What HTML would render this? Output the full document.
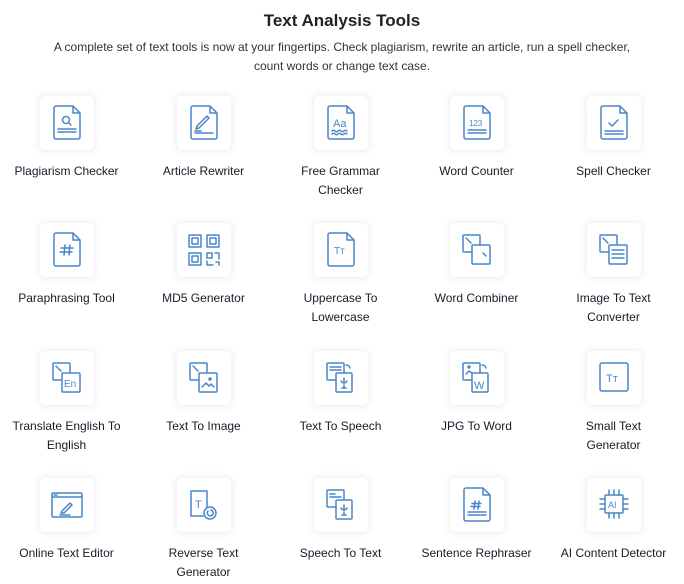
<!DOCTYPE html>
<html><head><meta charset="utf-8"><style>
body{margin:0;width:684px;height:584px;background:#fff;font-family:"Liberation Sans",sans-serif;color:#1c1c2b;position:relative;overflow:hidden}
h1{position:absolute;top:10px;left:0;width:684px;margin:0;text-align:center;font-size:17px;font-weight:bold;line-height:22px;color:#222}
p.s{position:absolute;top:38px;left:44px;width:596px;margin:0;text-align:center;font-size:12px;line-height:19px;color:#333}
.c{position:absolute;width:137px;text-align:center}
.b{width:54px;height:54px;margin:0 auto;border-radius:5px;background:#fff;box-shadow:0 0 6px 2px rgba(120,140,170,.13)}
.b svg{width:54px;height:54px;fill:none;stroke:#4a86c8;stroke-width:1.5;stroke-linecap:round;stroke-linejoin:round}
.b svg .f{fill:#fff}
.b svg text{fill:#4a86c8;stroke:none;font-family:"Liberation Sans",sans-serif}
.l{margin-top:12px;font-size:12px;line-height:19px;color:#1a1a2a}
</style></head><body>
<svg width="0" height="0" style="position:absolute"><defs>
<path id="d" d="M16 10H33L40 17V41A2 2 0 0 1 38 43H16A2 2 0 0 1 14 41V12A2 2 0 0 1 16 10ZM33 10V17H40"/>
<rect id="bk" x="13" y="12" width="17" height="17" rx="1"/>
</defs></svg>
<h1>Text Analysis Tools</h1>
<p class="s">A complete set of text tools is now at your fingertips. Check plagiarism, rewrite an article, run a spell checker, count words or change text case.</p>

<div class="c" style="left:-2px;top:96px"><div class="b"><svg><use href="#d"/><circle cx="26" cy="24" r="3.5"/><path d="M28.5 26.5L31 29M18 33H36M18 36H36"/></svg></div><div class="l">Plagiarism Checker</div></div>
<div class="c" style="left:135px;top:96px"><div class="b"><svg><use href="#d"/><path d="M20 30L30 20L32 22L22 32L19 33Z M18 35H24M18 37H36"/></svg></div><div class="l">Article Rewriter</div></div>
<div class="c" style="left:272px;top:96px"><div class="b"><svg><use href="#d"/><text x="19" y="31" font-size="11">Aa</text><path d="M18 35q1.5-1.5 3 0t3 0 3 0 3 0 3 0M18 38q1.5-1.5 3 0t3 0 3 0 3 0 3 0"/></svg></div><div class="l">Free Grammar<br>Checker</div></div>
<div class="c" style="left:408px;top:96px"><div class="b"><svg><use href="#d"/><text x="19" y="30" font-size="8">123</text><path d="M18 34H36M18 37H36"/></svg></div><div class="l">Word Counter</div></div>
<div class="c" style="left:545px;top:96px"><div class="b"><svg><use href="#d"/><path d="M22 27L25 30L31 24M18 35H36M18 38H36"/></svg></div><div class="l">Spell Checker</div></div>

<div class="c" style="left:-2px;top:223px"><div class="b"><svg><use href="#d"/><path d="M25 22L24 32M30 22L29 32M21 25H33M20 29H32"/></svg></div><div class="l">Paraphrasing Tool</div></div>
<div class="c" style="left:135px;top:223px"><div class="b"><svg><rect x="12" y="12" width="12" height="12"/><rect x="15" y="15" width="6" height="6"/><rect x="30" y="12" width="12" height="12"/><rect x="33" y="15" width="6" height="6"/><rect x="12" y="30" width="12" height="12"/><rect x="15" y="33" width="6" height="6"/><path d="M30 30H35V35H30ZM38 30H42V36M30 38V42H36M39 39H42V42"/></svg></div><div class="l">MD5 Generator</div></div>
<div class="c" style="left:272px;top:223px"><div class="b"><svg><use href="#d"/><text x="20" y="31" font-size="10">Tт</text></svg></div><div class="l">Uppercase To<br>Lowercase</div></div>
<div class="c" style="left:408px;top:223px"><div class="b"><svg><use href="#bk"/><path d="M16 15L21 20"/><rect class="f" x="22" y="22" width="18" height="19" rx="1"/><path d="M33 30L36 33"/></svg></div><div class="l">Word Combiner</div></div>
<div class="c" style="left:545px;top:223px"><div class="b"><svg><use href="#bk"/><path d="M16 15L21 20"/><rect class="f" x="22" y="22" width="18" height="19" rx="1"/><path d="M25 27H37M25 31H37M25 35H37"/></svg></div><div class="l">Image To Text<br>Converter</div></div>

<div class="c" style="left:-2px;top:351px"><div class="b"><svg><use href="#bk"/><path d="M16 15L21 20"/><rect class="f" x="22" y="22" width="18" height="19" rx="1"/><text x="24" y="36" font-size="10">En</text></svg></div><div class="l">Translate English To<br>English</div></div>
<div class="c" style="left:135px;top:351px"><div class="b"><svg><use href="#bk"/><path d="M16 15L21 20"/><rect class="f" x="22" y="22" width="18" height="19" rx="1"/><path d="M25 36L29 32L32 35L34 33L37 36"/><circle cx="33" cy="28" r="1"/></svg></div><div class="l">Text To Image</div></div>
<div class="c" style="left:272px;top:351px"><div class="b"><svg><use href="#bk"/><path d="M16 16H27M16 19H27M32 14q3 0 4 3"/><rect class="f" x="22" y="22" width="16" height="19" rx="1"/><path d="M30 27V32M27 30q3 4 6 0M30 34V37M28 37H32"/></svg></div><div class="l">Text To Speech</div></div>
<div class="c" style="left:408px;top:351px"><div class="b"><svg><use href="#bk"/><path d="M16 23L19 20L22 22M32 14q3 0 4 3"/><circle cx="19" cy="16" r="1"/><rect class="f" x="22" y="22" width="16" height="19" rx="1"/><text x="24" y="38" font-size="11">W</text></svg></div><div class="l">JPG To Word</div></div>
<div class="c" style="left:545px;top:351px"><div class="b"><svg><rect x="13" y="12" width="28" height="28" rx="2"/><text x="19" y="31" font-size="11">Tт</text></svg></div><div class="l">Small Text<br>Generator</div></div>

<div class="c" style="left:-2px;top:478px"><div class="b"><svg><rect x="12" y="15" width="30" height="24" rx="1"/><path d="M12 19H42M14 17H17M22 33L30 25L32 27L24 35L21 35ZM20 37H30"/></svg></div><div class="l">Online Text Editor</div></div>
<div class="c" style="left:135px;top:478px"><div class="b"><svg><path d="M30 29V13H14V38H26"/><text x="18" y="30" font-size="11">T</text><circle class="f" cx="33" cy="35" r="6"/><path d="M31 33a3 3 0 1 0 3 -1"/></svg></div><div class="l">Reverse Text<br>Generator</div></div>
<div class="c" style="left:272px;top:478px"><div class="b"><svg><use href="#bk"/><path d="M16 16H21M16 19H27"/><rect class="f" x="22" y="22" width="16" height="19" rx="1"/><path d="M30 27V32M27 30q3 4 6 0M30 34V37M28 37H32"/></svg></div><div class="l">Speech To Text</div></div>
<div class="c" style="left:408px;top:478px"><div class="b"><svg><use href="#d"/><path d="M25 23L24 31M29 23L28 31M22 25.5H31M21 28.5H30M18 34H36M18 37H36"/></svg></div><div class="l">Sentence Rephraser</div></div>
<div class="c" style="left:545px;top:478px"><div class="b"><svg><rect x="18" y="17" width="18" height="18" rx="1"/><path d="M22 12V17M27 12V17M32 12V17M22 35V40M27 35V40M32 35V40M13 21H18M13 26H18M13 31H18M36 21H41M36 26H41M36 31H41"/><text x="21" y="30" font-size="9">AI</text></svg></div><div class="l">AI Content Detector</div></div>
</body></html>
